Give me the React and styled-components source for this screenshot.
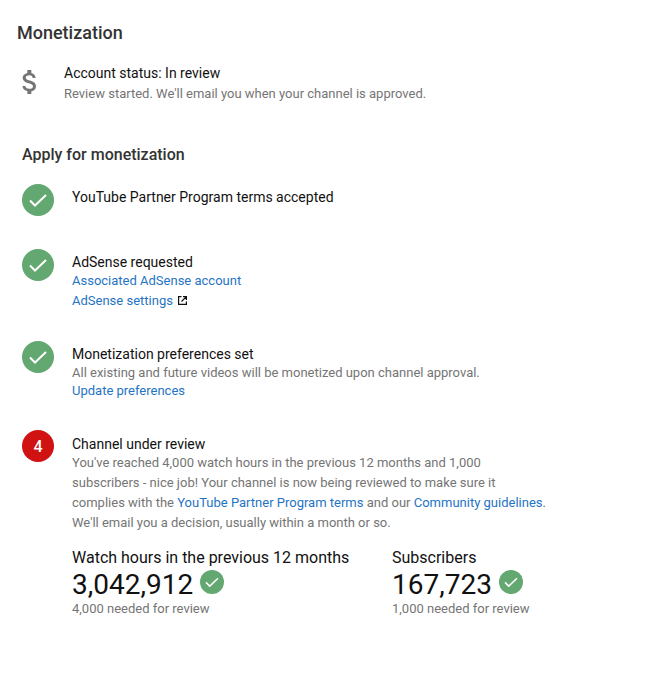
import React from "react";
import styled, { createGlobalStyle } from "styled-components";

const Global = createGlobalStyle`
  html, body { margin: 0; padding: 0; background: #fff; }
  body { font-family: Roboto, "Liberation Sans", sans-serif; color: #0d0d0d; }
`;
const Page = styled.div`
  width: 659px; height: 673px; box-sizing: border-box; overflow: hidden;
  padding: 22px 0 0 17px;
`;
const Title = styled.h1`
  margin: 0; font-size: 18px; line-height: 22px; font-weight: 500; color: #333;
`;
const Status = styled.div`
  display: flex; margin-top: 20px; gap: 18px; align-items: flex-start;
`;
const DollarIcon = styled.svg`
  width: 32px; height: 32px; flex: none; margin: 2px 0 0 -3px; fill: #757575;
`;
const Line = styled.div`
  font-size: 14px; line-height: 18px; color: #111;
`;
const StatusNote = styled.div`
  font-size: 13px; line-height: 20px; color: #757575; margin-top: 2px;
`;
const Sub = styled.div`
  font-size: 13px; line-height: ${p => p.$lh || 20}px; color: #757575;
`;
const Section = styled.div`
  padding-left: 5px; margin-top: 40px;
`;
const Heading = styled.h2`
  margin: 0 0 18px; font-size: 16px; line-height: 22px; font-weight: 500; color: #333;
`;
const Step = styled.div`
  display: flex; gap: 18px; margin-bottom: ${p => p.$gap}px;
`;
const Badge = styled.div`
  width: 32px; height: 32px; border-radius: 50%; flex: none;
  background: #d01212; color: #fff;
  display: flex; align-items: center; justify-content: center;
  font-size: 16px; font-weight: 500;
`;
const Body = styled.div`
  padding-top: ${p => p.$top || 4}px; width: 476px;
`;
const A = styled.a`
  color: #1f74c4; text-decoration: none;
`;
const LinkLine = styled.div`
  display: flex; align-items: center; gap: 5px; font-size: 13px;
  line-height: ${p => p.$lh || 20}px; color: #1f74c4;
`;
const ExternalIcon = styled.svg`
  width: 9px; height: 9px; flex: none;
`;
const Stats = styled.div`
  display: flex; margin-top: 15px;
`;
const Stat = styled.div`
  width: 320px; flex: none;
`;
const StatLabel = styled.div`
  font-size: 16px; line-height: 20px; color: #111;
`;
const StatValue = styled.div`
  display: flex; align-items: center; gap: 7px; font-size: 28px; line-height: 34px; color: #111;
`;
const Small = styled.div`
  font-size: 13px; line-height: 16px; color: #757575; margin-top: -1px;
`;
const CheckIcon = styled.svg`
  flex: none; width: ${p => p.$size}px; height: ${p => p.$size}px;
  margin-top: ${p => p.$lift ? "-6px" : "0"};
`;
const Check = ({ size = 32, lift }) => (
  <CheckIcon $size={size} $lift={lift} viewBox="0 0 32 32">
    <circle cx="16" cy="16" r="16" fill="#62a870" />
    <path d="M8 16.5l5 5L24 11" fill="none" stroke="#fff" strokeWidth="2" />
  </CheckIcon>
);
const External = () => (
  <ExternalIcon viewBox="0 0 9 9">
    <path d="M3.5.6H.6v7.8h7.8V5.5M5 .6h3.4V4M8.4.6L3.5 5.5" fill="none" stroke="#111" strokeWidth="1.2" />
  </ExternalIcon>
);

export default function App() {
  return (
    <Page>
      <Global />
      <Title>Monetization</Title>
      <Status>
        <DollarIcon viewBox="0 0 24 24">
          <path d="M11.8 10.9c-2.27-.59-3-1.2-3-2.15 0-1.09 1.01-1.85 2.7-1.85 1.78 0 2.44.85 2.5 2.1h2.21c-.07-1.72-1.12-3.3-3.21-3.81V3h-3v2.16c-1.94.42-3.5 1.68-3.5 3.61 0 2.31 1.91 3.46 4.7 4.13 2.5.6 3 1.48 3 2.41 0 .69-.49 1.79-2.7 1.79-2.06 0-2.87-.92-2.98-2.1h-2.2c.12 2.19 1.76 3.42 3.68 3.83V21h3v-2.15c1.95-.37 3.5-1.5 3.5-3.55 0-2.84-2.43-3.81-4.7-4.4z" />
        </DollarIcon>
        <div>
          <Line>Account status: In review</Line>
          <StatusNote>Review started. We'll email you when your channel is approved.</StatusNote>
        </div>
      </Status>
      <Section>
        <Heading>Apply for monetization</Heading>
        <Step $gap={33}>
          <Check />
          <Body><Line>YouTube Partner Program terms accepted</Line></Body>
        </Step>
        <Step $gap={30}>
          <Check />
          <Body>
            <Line>AdSense requested</Line>
            <LinkLine $lh={19}>Associated AdSense account</LinkLine>
            <LinkLine $lh={21}>AdSense settings <External /></LinkLine>
          </Body>
        </Step>
        <Step $gap={30}>
          <Check />
          <Body>
            <Line>Monetization preferences set</Line>
            <Sub $lh={19}>All existing and future videos will be monetized upon channel approval.</Sub>
            <LinkLine $lh={18}>Update preferences</LinkLine>
          </Body>
        </Step>
        <Step $gap={0}>
          <Badge>4</Badge>
          <Body $top={5}>
            <Line>Channel under review</Line>
            <Sub>You've reached 4,000 watch hours in the previous 12 months and 1,000 subscribers - nice job! Your channel is now being reviewed to make sure it complies with the <A>YouTube Partner Program terms</A> and our <A>Community guidelines</A>. We'll email you a decision, usually within a month or so.</Sub>
            <Stats>
              <Stat>
                <StatLabel>Watch hours in the previous 12 months</StatLabel>
                <StatValue>3,042,912 <Check size={24} lift /></StatValue>
                <Small>4,000 needed for review</Small>
              </Stat>
              <Stat>
                <StatLabel>Subscribers</StatLabel>
                <StatValue>167,723 <Check size={24} lift /></StatValue>
                <Small>1,000 needed for review</Small>
              </Stat>
            </Stats>
          </Body>
        </Step>
      </Section>
    </Page>
  );
}
